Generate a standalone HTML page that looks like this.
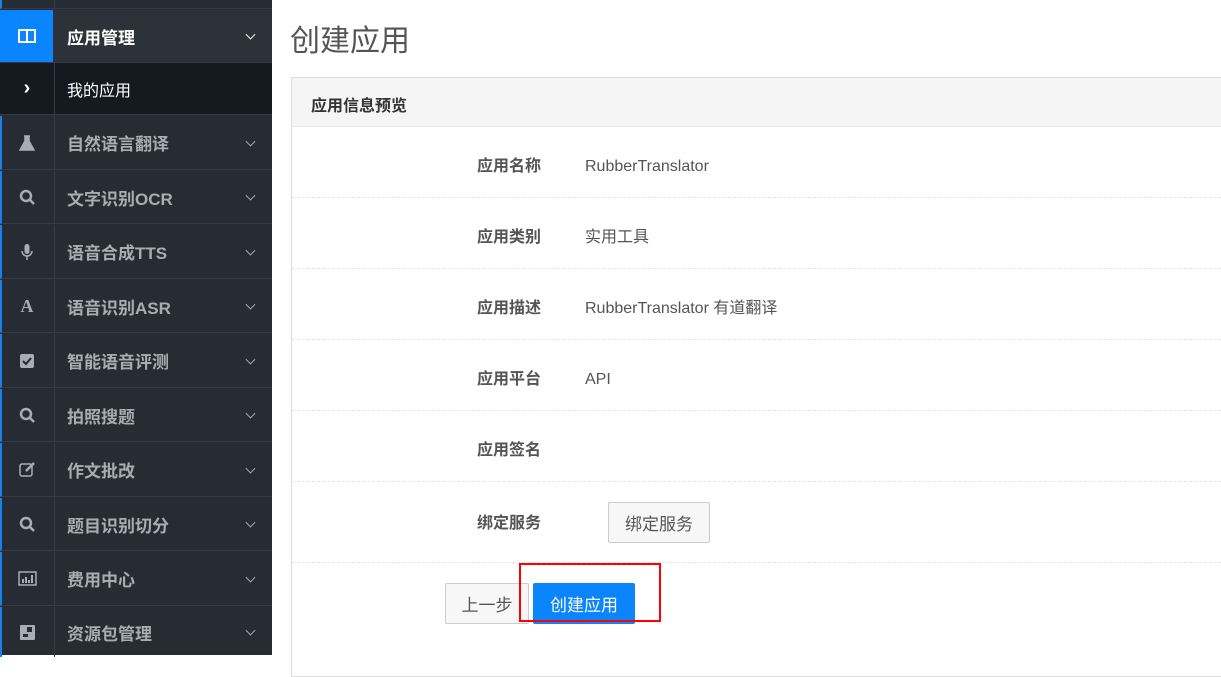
<!DOCTYPE html>
<html><head><meta charset="utf-8"><style>
*{margin:0;padding:0;box-sizing:border-box}
body{width:1221px;height:655px;overflow:hidden;background:#fff;font-family:"Liberation Sans","Noto Sans CJK SC",sans-serif;position:relative}
.sb{position:absolute;left:0;top:0;width:272px;height:655px;background:#272b33}
.it{position:absolute;left:0;width:272px;border-bottom:1px solid #353a43;border-left:2px solid #1a7fe8}
.ic{position:absolute;left:-2px;top:0;width:55px;height:100%;border-right:1px solid #353a43;display:flex;align-items:center;justify-content:center;color:#a9adb3}
.tx{position:absolute;left:65px;top:0;height:100%;display:flex;align-items:center;font-size:17px;font-weight:bold;color:#a9adb3}
.ch{position:absolute;right:18px;top:50%;width:7px;height:7px;border-right:1.5px solid #a9adb3;border-bottom:1.5px solid #a9adb3;transform:translateY(-70%) rotate(45deg)}
h1{position:absolute;left:290px;top:16px;font-size:30px;font-weight:normal;color:#555}
.pn{position:absolute;left:291px;top:77px;width:940px;height:600px;border:1px solid #ddd}
.ph{height:49px;background:#f5f5f5;border-bottom:1px solid #e6e6e6;font-size:16px;font-weight:bold;color:#333;padding:14px 0 0 19px}
.row{position:absolute;left:0;width:940px;height:71px;border-bottom:1px dashed #e4e4e4}
.lb{position:absolute;left:185px;font-size:16px;font-weight:bold;color:#555;top:30px;line-height:20px}
.vl{position:absolute;left:293px;font-size:16px;color:#555;top:30px;line-height:20px}
.btn{position:absolute;font-size:17px;border-radius:2px;display:flex;align-items:center;justify-content:center}
</style></head><body>
<div class="sb">
<div class="it" style="top:0;height:9px"><div class="ic"></div></div>
<div class="it" style="top:10px;height:53px;border-left:0;background:#2c313a"><div class="ic" style="left:0;background:#0a84ff;color:#fff;border-right:0;width:53px"><svg width="18" height="14" viewBox="0 0 18 14"><rect x="1" y="1" width="16" height="12" fill="none" stroke="#fff" stroke-width="2"/><line x1="9" y1="1" x2="9" y2="13" stroke="#fff" stroke-width="2"/></svg></div><div class="tx" style="left:67px;color:#fff">应用管理</div><div class="ch" style="border-color:#fff"></div></div>
<div class="it" style="top:63px;height:52px;border-left:0;background:#151a21"><div class="ic" style="left:0;color:#fff;font-size:20px;font-weight:bold">›</div><div class="tx" style="left:67px;color:#fff;font-weight:normal;font-size:16px">我的应用</div></div>
<div class="it" style="top:116px;height:54px"><div class="ic"><svg width="16" height="16"><path d="M5 1h6M6 1v5L1 15h14L10 6V1" fill="#a9adb3" stroke="#a9adb3" stroke-width="1.5"/></svg></div><div class="tx">自然语言翻译</div><div class="ch"></div></div>
<div class="it" style="top:171px;height:53px"><div class="ic"><svg width="16" height="16"><circle cx="7" cy="7" r="5" fill="none" stroke="#a9adb3" stroke-width="2.5"/><line x1="10.5" y1="10.5" x2="15" y2="15" stroke="#a9adb3" stroke-width="2.5"/></svg></div><div class="tx">文字识别OCR</div><div class="ch"></div></div>
<div class="it" style="top:225px;height:54px"><div class="ic"><svg width="12" height="16"><rect x="3.5" y="0" width="5" height="10" rx="2.5" fill="#a9adb3"/><path d="M1 7a5 5 0 0 0 10 0M6 12v4" stroke="#a9adb3" fill="none" stroke-width="1.5"/></svg></div><div class="tx">语音合成TTS</div><div class="ch"></div></div>
<div class="it" style="top:280px;height:53px"><div class="ic" style="font-family:'Liberation Serif';font-weight:bold;font-size:18px">A</div><div class="tx">语音识别ASR</div><div class="ch"></div></div>
<div class="it" style="top:334px;height:54px"><div class="ic"><svg width="14" height="14"><rect width="14" height="14" rx="2" fill="#a9adb3"/><path d="M3 7l3 3 5-6" stroke="#272b33" stroke-width="2" fill="none"/></svg></div><div class="tx">智能语音评测</div><div class="ch"></div></div>
<div class="it" style="top:389px;height:53px"><div class="ic"><svg width="16" height="16"><circle cx="7" cy="7" r="5" fill="none" stroke="#a9adb3" stroke-width="2.5"/><line x1="10.5" y1="10.5" x2="15" y2="15" stroke="#a9adb3" stroke-width="2.5"/></svg></div><div class="tx">拍照搜题</div><div class="ch"></div></div>
<div class="it" style="top:443px;height:54px"><div class="ic"><svg width="17" height="15"><rect x="1" y="2" width="12" height="12" rx="2" fill="none" stroke="#a9adb3" stroke-width="1.5"/><path d="M7 9l8-8" stroke="#a9adb3" stroke-width="2.5"/></svg></div><div class="tx">作文批改</div><div class="ch"></div></div>
<div class="it" style="top:498px;height:53px"><div class="ic"><svg width="16" height="16"><circle cx="7" cy="7" r="5" fill="none" stroke="#a9adb3" stroke-width="2.5"/><line x1="10.5" y1="10.5" x2="15" y2="15" stroke="#a9adb3" stroke-width="2.5"/></svg></div><div class="tx">题目识别切分</div><div class="ch"></div></div>
<div class="it" style="top:552px;height:54px"><div class="ic"><svg width="19" height="15"><rect x="1" y="1" width="17" height="13" fill="none" stroke="#a9adb3" stroke-width="1.5"/><path d="M5 12V8M8 12V6M11 12V9M14 12V4" stroke="#a9adb3" stroke-width="2"/></svg></div><div class="tx">费用中心</div><div class="ch"></div></div>
<div class="it" style="top:607px;height:50px;border-bottom:0"><div class="ic"><svg width="15" height="15"><rect width="15" height="15" rx="1" fill="#a9adb3"/><rect x="7" y="2" width="5" height="5" fill="#272b33"/><rect x="3" y="9" width="5" height="3" fill="#272b33"/></svg></div><div class="tx">资源包管理</div><div class="ch"></div></div>
</div>
<h1>创建应用</h1>
<div class="pn"><div class="ph">应用信息预览</div>
<div class="row" style="top:49px;height:71px"><div class="lb">应用名称</div><div class="vl">RubberTranslator</div></div>
<div class="row" style="top:120px"><div class="lb">应用类别</div><div class="vl">实用工具</div></div>
<div class="row" style="top:191px"><div class="lb">应用描述</div><div class="vl">RubberTranslator 有道翻译</div></div>
<div class="row" style="top:262px"><div class="lb">应用平台</div><div class="vl">API</div></div>
<div class="row" style="top:333px"><div class="lb">应用签名</div></div>
<div class="row" style="top:404px;height:81px"><div class="lb" style="top:32px">绑定服务</div></div>
</div>
<div class="btn" style="left:608px;top:502px;width:102px;height:41px;border:1px solid #ccc;background:#f7f7f7;color:#555">绑定服务</div>
<div class="btn" style="left:445px;top:583px;width:84px;height:41px;border:1px solid #ccc;background:#f7f7f7;color:#555">上一步</div>
<div class="btn" style="left:533px;top:583px;width:102px;height:41px;background:#0a84ff;color:#fff">创建应用</div>
<div style="position:absolute;left:519px;top:563px;width:142px;height:59px;border:2px solid #f00"></div>
</body></html>
